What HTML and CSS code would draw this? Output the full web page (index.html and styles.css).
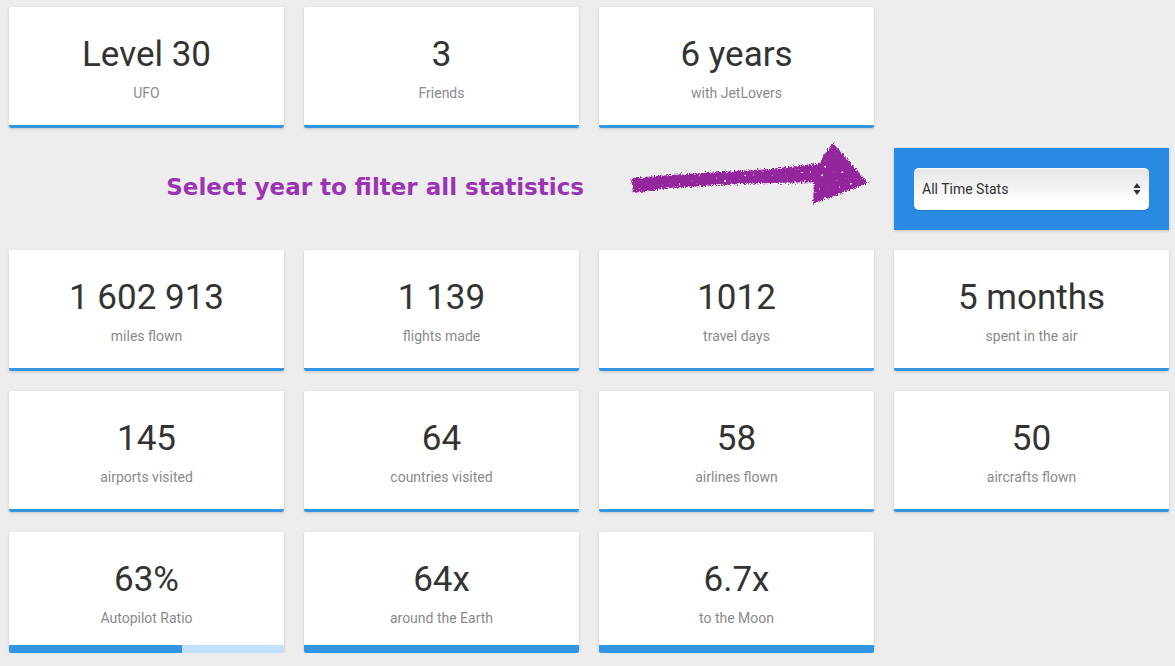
FILE: index.html
```html
<!DOCTYPE html>
<html lang="en">
<head>
    <meta charset="UTF-8">
    <title>JetLovers - Statistics</title>
    <link rel="stylesheet" href="styles.css">
</head>
<body>
    <div class="stats">
        <div class="card">
            <div class="value">Level 30</div>
            <div class="label">UFO</div>
            <div class="bar"></div>
        </div>
        <div class="card">
            <div class="value">3</div>
            <div class="label">Friends</div>
            <div class="bar"></div>
        </div>
        <div class="card">
            <div class="value">6 years</div>
            <div class="label">with JetLovers</div>
            <div class="bar"></div>
        </div>
        <div class="empty"></div>

        <div class="filter-hint">
            <span class="hint-text">Select year to filter all statistics</span>
            <svg class="arrow" width="240" height="70" viewBox="0 0 240 70">
                <defs>
                    <filter id="brush" x="-10%" y="-20%" width="120%" height="140%">
                        <feTurbulence type="fractalNoise" baseFrequency="0.7" numOctaves="2" seed="4" result="noise"/>
                        <feDisplacementMap in="SourceGraphic" in2="noise" scale="6" xChannelSelector="R" yChannelSelector="G" result="rough"/>
                        <feTurbulence type="fractalNoise" baseFrequency="0.35" numOctaves="1" seed="9" result="spots"/>
                        <feColorMatrix in="spots" type="matrix" values="0 0 0 0 0  0 0 0 0 0  0 0 0 0 0  0 0 0 -12 9.4" result="mask"/>
                        <feComposite in="rough" in2="mask" operator="in"/>
                    </filter>
                </defs>
                <g fill="#94279d" filter="url(#brush)">
                    <polygon points="1,38 40,35 90,32 140,29 194,23 196,42 140,43 90,45 40,48 3,53"/>
                    <polygon points="203,3 238,43 183,64 184,36 192,18"/>
                </g>
            </svg>
        </div>
        <div class="year-box">
            <div class="select-wrap">
                <select class="year-select">
                    <option>All Time Stats</option>
                    <option>2016</option>
                    <option>2015</option>
                    <option>2014</option>
                </select>
                <svg class="select-arrows" width="8" height="14" viewBox="0 0 8 14">
                    <polygon points="4,1 7.5,6 0.5,6" fill="#333"/>
                    <polygon points="4,13 7.5,8 0.5,8" fill="#333"/>
                </svg>
            </div>
        </div>

        <div class="card">
            <div class="value">1 602 913</div>
            <div class="label">miles flown</div>
            <div class="bar"></div>
        </div>
        <div class="card">
            <div class="value">1 139</div>
            <div class="label">flights made</div>
            <div class="bar"></div>
        </div>
        <div class="card">
            <div class="value">1012</div>
            <div class="label">travel days</div>
            <div class="bar"></div>
        </div>
        <div class="card">
            <div class="value">5 months</div>
            <div class="label">spent in the air</div>
            <div class="bar"></div>
        </div>

        <div class="card">
            <div class="value">145</div>
            <div class="label">airports visited</div>
            <div class="bar"></div>
        </div>
        <div class="card">
            <div class="value">64</div>
            <div class="label">countries visited</div>
            <div class="bar"></div>
        </div>
        <div class="card">
            <div class="value">58</div>
            <div class="label">airlines flown</div>
            <div class="bar"></div>
        </div>
        <div class="card">
            <div class="value">50</div>
            <div class="label">aircrafts flown</div>
            <div class="bar"></div>
        </div>

        <div class="card">
            <div class="value">63%</div>
            <div class="label">Autopilot Ratio</div>
            <div class="bar bar-progress"><div class="bar-fill" style="width: 63%"></div></div>
        </div>
        <div class="card">
            <div class="value">64x</div>
            <div class="label">around the Earth</div>
            <div class="bar bar-progress"><div class="bar-fill" style="width: 100%"></div></div>
        </div>
        <div class="card">
            <div class="value">6.7x</div>
            <div class="label">to the Moon</div>
            <div class="bar bar-progress"><div class="bar-fill" style="width: 100%"></div></div>
        </div>
    </div>
</body>
</html>
```

FILE: styles.css
```css
body {
    margin: 0;
    background-color: #ededed;
    font-family: Roboto, "Liberation Sans", Arial, sans-serif;
    color: #333;
}

.stats {
    display: grid;
    grid-template-columns: repeat(4, 275px);
    grid-auto-rows: 121px;
    grid-template-rows: 121px 82px;
    gap: 20px;
    padding: 7px 6px 0 9px;
}

/* Stat cards */
.card {
    display: flex;
    flex-direction: column;
    align-items: center;
    background-color: #fff;
    border-radius: 2px;
    box-shadow: 0 1px 3px rgba(0, 0, 0, 0.18);
    overflow: hidden;
}

.value {
    margin-top: 27px;
    font-size: 35px;
    line-height: 42px;
}

.label {
    margin-top: 9px;
    font-size: 14px;
    line-height: 17px;
    color: #8a8a8a;
}

.bar {
    margin-top: auto;
    align-self: stretch;
    height: 3px;
    background-color: #3296e6;
}

.bar-progress {
    height: 8px;
    background-color: #c3e0fa;
}

.bar-fill {
    height: 100%;
    background-color: #3296e6;
}

/* Year filter */
.filter-hint {
    grid-column: 1 / 4;
    display: flex;
    justify-content: flex-end;
    align-items: flex-start;
    gap: 46px;
    padding-right: 4px;
}

.hint-text {
    margin-top: 26px;
    font-family: "DejaVu Sans", Verdana, sans-serif;
    font-weight: bold;
    font-size: 23px;
    color: #9a34b2;
}

.arrow {
    margin-top: -8px;
    overflow: visible;
}

.year-box {
    padding: 20px;
    background-color: #2a8ae2;
    box-shadow: 0 1px 3px rgba(0, 0, 0, 0.2);
}

.select-wrap {
    position: relative;
    height: 42px;
}

.year-select {
    width: 100%;
    height: 42px;
    padding: 0 8px;
    border: none;
    border-radius: 5px;
    appearance: none;
    -webkit-appearance: none;
    background: linear-gradient(to bottom, #e6e6e6 0%, #f2f2f2 45%, #ffffff 80%);
    box-shadow: inset 0 1px 1px rgba(255, 255, 255, 0.8), 0 1px 1px rgba(0, 0, 0, 0.15);
    font-family: Roboto, "Liberation Sans", Arial, sans-serif;
    font-size: 14px;
    color: #333;
}

.select-arrows {
    position: absolute;
    right: 8px;
    top: 14px;
    pointer-events: none;
}
```
